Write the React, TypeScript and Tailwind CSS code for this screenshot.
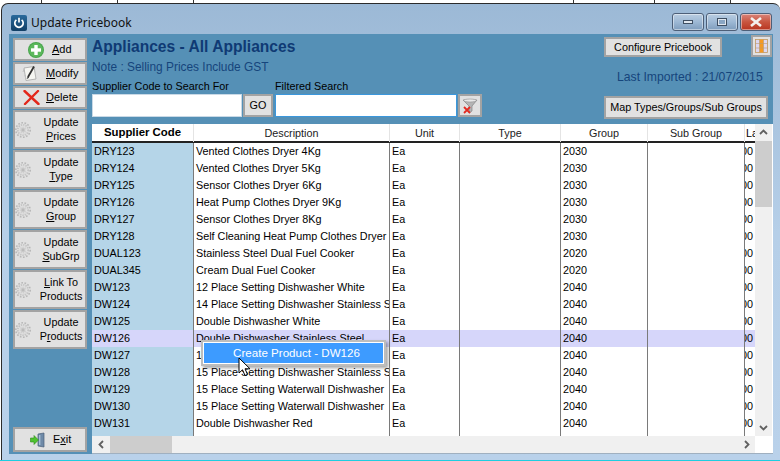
import React from "react";

type Row = [string, string, string];
const rows: Row[] = [
  ["DRY123", "Vented Clothes Dryer 4Kg", "2030"],
  ["DRY124", "Vented Clothes Dryer 5Kg", "2030"],
  ["DRY125", "Sensor Clothes Dryer 6Kg", "2030"],
  ["DRY126", "Heat Pump Clothes Dryer 9Kg", "2030"],
  ["DRY127", "Sensor Clothes Dryer 8Kg", "2030"],
  ["DRY128", "Self Cleaning Heat Pump Clothes Dryer 6Kg", "2030"],
  ["DUAL123", "Stainless Steel Dual Fuel Cooker", "2020"],
  ["DUAL345", "Cream Dual Fuel Cooker", "2020"],
  ["DW123", "12 Place Setting Dishwasher White", "2040"],
  ["DW124", "14 Place Setting Dishwasher Stainless Steel", "2040"],
  ["DW125", "Double Dishwasher White", "2040"],
  ["DW126", "Double Dishwasher Stainless Steel", "2040"],
  ["DW127", "15 Place Setting Dishwasher White", "2040"],
  ["DW128", "15 Place Setting Dishwasher Stainless Steel", "2040"],
  ["DW129", "15 Place Setting Waterwall Dishwasher", "2040"],
  ["DW130", "15 Place Setting Waterwall Dishwasher", "2040"],
  ["DW131", "Double Dishwasher Red", "2040"],
];

const btn = "border-2 border-[#a3a3a3] bg-[#e1e1e1] text-black";

function Gear() {
  return (
    <svg width="16" height="16" viewBox="0 0 16 16" className="shrink-0">
      <circle cx="8" cy="8" r="7.2" fill="none" stroke="#b8b8b8" strokeWidth="1.6" strokeDasharray="1.7 1.5" />
      <circle cx="8" cy="8" r="5.2" fill="none" stroke="#c4c4c4" strokeWidth="1.8" strokeDasharray="1.4 1" />
      <circle cx="8" cy="8" r="3.4" fill="#cecece" />
      <circle cx="8" cy="8" r="3" fill="none" stroke="#f0f0f0" strokeWidth="0.8" strokeDasharray="1 1.2" />
      <circle cx="8" cy="8" r="1.4" fill="#bbbbbb" />
    </svg>
  );
}

function TwoLine({ a, b }: { a: React.ReactNode; b: React.ReactNode }) {
  return (
    <div className={`${btn} h-[39px] flex items-center shrink-0`}>
      <Gear />
      <div className="flex-1 ml-[6px] text-center text-[10.8px] leading-[14px] pb-[2px] whitespace-nowrap">
        <div>{a}</div>
        <div>{b}</div>
      </div>
    </div>
  );
}

function U({ children }: { children: React.ReactNode }) {
  return <span className="underline">{children}</span>;
}

function Sidebar() {
  return (
    <div className="w-[74px] shrink-0 flex flex-col gap-[1px] h-[414px]">
      <div className={`${btn} h-[23px] flex items-center pl-[13px] gap-[8px] shrink-0 text-[11px]`}>
        <svg width="16" height="16" viewBox="0 0 16 16">
          <circle cx="8" cy="8" r="8" fill="#47a54b" />
          <circle cx="8" cy="8" r="7" fill="#5cb85c" />
          <rect x="3" y="6.3" width="10" height="3.4" fill="#fff" />
          <rect x="6.3" y="3" width="3.4" height="10" fill="#fff" />
        </svg>
        <span><U>A</U>dd</span>
      </div>
      <div className={`${btn} h-[23px] flex items-center pl-[7px] gap-[8px] shrink-0 text-[11px]`}>
        <svg width="16" height="17" viewBox="0 0 16 17">
          <path d="M2 3 L12 1.5 L14 14 L4 15.5 Z" fill="#f6f6f2" stroke="#a5a5a5" strokeWidth="0.8" />
          <path d="M2 4 L1 7 M3 10 L4 14" stroke="#c0c0c0" strokeWidth="1" />
          <path d="M12 1.5 L6 12" stroke="#333" strokeWidth="1.8" />
          <path d="M6 11.5 L5.2 13.6 L7 12.4" fill="#333" stroke="#333" strokeWidth="0.5" />
        </svg>
        <span><U>M</U>odify</span>
      </div>
      <div className={`${btn} h-[23px] flex items-center pl-[8px] gap-[6px] shrink-0 text-[11px]`}>
        <svg width="17" height="15" viewBox="0 0 17 15">
          <path d="M1.5 1 L15.5 14 M15 1 L2 14" stroke="#e3271b" strokeWidth="2.4" strokeLinecap="round" />
        </svg>
        <span><U>D</U>elete</span>
      </div>
      <TwoLine a="Update" b={<><U>P</U>rices</>} />
      <TwoLine a="Update" b={<><U>T</U>ype</>} />
      <TwoLine a="Update" b={<><U>G</U>roup</>} />
      <TwoLine a="Update" b={<><U>S</U>ubGrp</>} />
      <TwoLine a={<><U>L</U>ink To</>} b="Products" />
      <TwoLine a="Update" b={<>P<U>r</U>oducts</>} />
      <div className={`${btn} h-[25px] mt-auto flex items-center pl-[15px] gap-[7px] shrink-0 text-[11px]`}>
        <svg width="16" height="16" viewBox="0 0 16 16">
          <path d="M8 2 L14 1 V15 L8 14 Z" fill="#6f8aa8" stroke="#4b5f78" strokeWidth="0.7" />
          <rect x="9" y="3" width="1.4" height="10" fill="#a9bdd3" />
          <path d="M0.5 6 H4 V3.5 L8.5 8 L4 12.5 V10 H0.5 Z" fill="#4fc22f" stroke="#2e8c18" strokeWidth="0.6" />
        </svg>
        <span>E<U>x</U>it</span>
      </div>
    </div>
  );
}

function Header() {
  return (
    <div className="h-[90px] flex shrink-0">
      <div className="flex-1 flex flex-col">
        <div className="text-[15.6px] leading-[20px] font-bold text-[#0f3a74] h-[20px] mt-[3px]">Appliances - All Appliances</div>
        <div className="text-[11.9px] leading-[14px] text-[#15457c] mt-[3px]">Note : Selling Prices Include GST</div>
        <div className="flex mt-[5px] text-[10.8px] leading-[14px] text-black">
          <div className="w-[183px]">Supplier Code to Search For</div>
          <div>Filtered Search</div>
        </div>
        <div className="flex mt-[1px] h-[23px]">
          <div className="w-[150px] bg-white border border-[#c9d9e6]" />
          <div className={`${btn} w-[30px] ml-[1px] flex items-center justify-center text-[10.8px]`}>GO</div>
          <div className="w-[182px] ml-[2px] bg-white border border-[#3b97dc]" />
          <div className={`${btn} w-[24px] ml-[1px] flex items-center justify-center`}>
            <svg width="16" height="16" viewBox="0 0 16 16">
              <path d="M1 2 H15 L10 8 V13 L7 15 V8 Z" fill="#b5b5b5" stroke="#777" strokeWidth="0.6" />
              <ellipse cx="8" cy="2.5" rx="6.5" ry="1.5" fill="#e8e8e8" stroke="#888" strokeWidth="0.5" />
              <path d="M2 9 L8 15 M8 9 L2 15" stroke="#e32a20" strokeWidth="1.8" />
            </svg>
          </div>
        </div>
      </div>
      <div className="w-[169px] shrink-0 flex flex-col">
        <div className="flex items-start pt-[1px] h-[23px]">
          <div className={`${btn} w-[118px] h-[20px] mt-[2px] flex items-center justify-center text-[10.8px]`}>Configure Pricebook</div>
          <div className={`${btn} w-[21px] h-[22px] ml-[29px] flex items-center justify-center`}>
            <svg width="13" height="14" viewBox="0 0 13 14">
              <rect x="0.5" y="0.5" width="12" height="13" fill="#dcd8f2" stroke="#c09a60" strokeWidth="0.8" />
              <rect x="4.5" y="0.5" width="4" height="13" fill="#f59a23" />
              <path d="M0.5 4.5 H12.5 M0.5 9 H12.5 M4.5 0.5 V13.5 M8.5 0.5 V13.5" stroke="#b89a70" strokeWidth="0.6" />
            </svg>
          </div>
        </div>
        <div className="text-[12.2px] leading-[14px] text-[#15457c] mt-[13px] pl-[13px] whitespace-nowrap">Last Imported : 21/07/2015</div>
        <div className={`${btn} w-[164px] h-[23px] mt-[12px] flex items-center justify-center text-[10.8px] whitespace-nowrap`}>Map Types/Groups/Sub Groups</div>
      </div>
    </div>
  );
}

const cols = "grid-cols-[101px_196px_70px_101px_87px_97px_11px]";

function HeadCell({ children, bold }: { children: React.ReactNode; bold?: boolean }) {
  return (
    <div className={`h-[18px] flex items-center justify-center overflow-hidden whitespace-nowrap ${bold ? "font-bold text-black text-[11.4px]" : "border-l border-[#e4e4e4] text-[#222]"}`}>
      {children}
    </div>
  );
}

function Chevron({ d }: { d: string }) {
  return (
    <svg width="9" height="9" viewBox="0 0 9 9">
      <path d={d} fill="none" stroke="#606060" strokeWidth="1.8" />
    </svg>
  );
}

function Table() {
  return (
    <div className="h-[330px] bg-white flex flex-col text-[10.8px] border-b border-[#a0b0c0] shrink-0 font-['Liberation_Sans',sans-serif]">
      <div className="flex flex-1 min-h-0">
        <div className="w-[663px] flex flex-col">
          <div className={`grid ${cols} border-b-2 border-[#222] h-[19px] shrink-0`}>
            <HeadCell bold>Supplier Code</HeadCell>
            <HeadCell>Description</HeadCell>
            <HeadCell>Unit</HeadCell>
            <HeadCell>Type</HeadCell>
            <HeadCell>Group</HeadCell>
            <HeadCell>Sub Group</HeadCell>
            <div className="overflow-hidden border-l border-[#e4e4e4] pl-[1px] leading-[18px]">La</div>
          </div>
          <div className={`grid ${cols} flex-1 relative`}>
            <div className="bg-[#b5d5e8]">
              {rows.map((r, i) => (
                <div key={r[0]} className={`h-[17px] leading-[17px] pl-[2px] ${i === 11 ? "bg-[#d6d6fa]" : ""}`}>{r[0]}</div>
              ))}
            </div>
            <div className="border-l border-[#7a7a7a] overflow-hidden">
              {rows.map((r, i) => (
                <div key={r[0]} className={`h-[17px] leading-[17px] pl-[2px] overflow-hidden whitespace-nowrap ${i === 11 ? "bg-[#d6d6fa]" : ""}`}>{r[1]}</div>
              ))}
            </div>
            <div className="border-l border-[#7a7a7a]">
              {rows.map((r, i) => (
                <div key={r[0]} className={`h-[17px] leading-[17px] pl-[2px] ${i === 11 ? "bg-[#d6d6fa]" : ""}`}>Ea</div>
              ))}
            </div>
            <div className="border-l border-[#7a7a7a]">
              {rows.map((r, i) => (
                <div key={r[0]} className={`h-[17px] ${i === 11 ? "bg-[#d6d6fa]" : ""}`} />
              ))}
            </div>
            <div className="border-l border-[#7a7a7a]">
              {rows.map((r, i) => (
                <div key={r[0]} className={`h-[17px] leading-[17px] pl-[2px] ${i === 11 ? "bg-[#d6d6fa]" : ""}`}>{r[2]}</div>
              ))}
            </div>
            <div className="border-l border-[#7a7a7a]">
              {rows.map((r, i) => (
                <div key={r[0]} className={`h-[17px] ${i === 11 ? "bg-[#d6d6fa]" : ""}`} />
              ))}
            </div>
            <div className="border-l border-[#7a7a7a] overflow-hidden">
              {rows.map((r, i) => (
                <div key={r[0]} className={`h-[17px] leading-[17px] flex justify-end pr-[2px] ${i === 11 ? "bg-[#d6d6fa]" : ""}`}>
                  <span className="shrink-0">100</span>
                </div>
              ))}
            </div>
            <div className="absolute left-[109px] top-[197px] w-[185px] h-[26px] bg-white border-2 border-[#bdbdbd] shadow-[2px_2px_3px_rgba(0,0,0,0.35)] p-[1px]">
              <div className="h-full bg-[#3d9bff] text-white text-[11.6px] leading-[20px] text-center pl-[6px] font-['Liberation_Sans',sans-serif]">Create Product - DW126</div>
            </div>
            <svg width="14" height="20" viewBox="0 0 14 20" className="absolute left-[146px] top-[214px]">
              <path d="M1 1 V16 L4.5 12.8 L7 18.5 L9.5 17.4 L7 11.8 H12 Z" fill="#fff" stroke="#000" strokeWidth="1" strokeLinejoin="round" />
            </svg>
          </div>
          <div className="h-[17px] bg-[#f0f0f0] flex items-center shrink-0">
            <div className="w-[18px] flex justify-center shrink-0"><Chevron d="M6 1 L2.5 4.5 L6 8" /></div>
            <div className="w-[62px] h-[17px] bg-[#cdcdcd]" />
            <div className="flex-1" />
            <div className="w-[18px] flex justify-center shrink-0"><Chevron d="M3 1 L6.5 4.5 L3 8" /></div>
          </div>
        </div>
        <div className="w-[17px] flex flex-col shrink-0">
          <div className="flex-1 flex flex-col bg-[#f0f0f0]">
            <div className="h-[17px] flex items-center justify-center shrink-0"><Chevron d="M1 6 L4.5 2.5 L8 6" /></div>
            <div className="h-[66px] bg-[#cdcdcd] shrink-0" />
            <div className="flex-1" />
            <div className="h-[17px] flex items-center justify-center shrink-0"><Chevron d="M1 3 L4.5 6.5 L8 3" /></div>
          </div>
          <div className="h-[17px] bg-white shrink-0" />
        </div>
      </div>
    </div>
  );
}

function WinBtn({ children, red }: { children: React.ReactNode; red?: boolean }) {
  return (
    <div className={`w-[32px] h-[18px] rounded-[3px] border border-[#4d5f78] flex items-center justify-center shadow-[inset_0_0_0_1px_rgba(255,255,255,0.45)] ${red ? "bg-gradient-to-b from-[#d9837a] via-[#c8553f] to-[#b8341f]" : "bg-gradient-to-b from-[#b9cde2] via-[#9db8d4] to-[#7f9dbd]"}`}>
      {children}
    </div>
  );
}

export default function App() {
  return (
    <div className="w-[780px] h-[461px] bg-white overflow-hidden flex flex-col font-['Liberation_Sans',sans-serif]">
      <div className="h-[3px] flex shrink-0">
        <div className="w-[42px] border-r border-[#333]" />
        <div className="w-[76px] border-r border-[#333]" />
        <div className="w-[76px] border-r border-[#333]" />
        <div className="w-[380px] border-r border-[#333]" />
        <div className="w-[81px] border-r border-[#333]" />
        <div className="w-[76px] border-r border-[#333]" />
      </div>
      <div className="ml-[1px] h-[457px] shrink-0 border-l border-t border-[#2b2b2b] rounded-t-[7px] bg-gradient-to-b from-[#9cb9d6] via-[#b6cfe8] to-[#b9d1ea] flex flex-col pl-[7px]">
        <div className="h-[30px] flex items-center shrink-0 pt-[8px]">
          <div className="w-[16px] h-[16px] ml-[2px] rounded-[2px] bg-gradient-to-b from-[#2a6a9c] to-[#123f66] flex items-center justify-center">
            <svg width="12" height="12" viewBox="0 0 12 12">
              <path d="M3.4 2.8 A4.2 4.2 0 1 0 8.6 2.8" fill="none" stroke="#fff" strokeWidth="1.7" />
              <path d="M6 0.8 V5.5" stroke="#fff" strokeWidth="1.7" />
            </svg>
          </div>
          <div className="ml-[4px] text-[12px] text-[#111] font-['Noto_Sans',sans-serif] leading-[16px]">Update Pricebook</div>
          <div className="ml-auto flex gap-[2px] mr-[8px] -mt-[3px]">
            <WinBtn><div className="w-[10px] h-[4px] bg-[#dfe6ee] border border-[#3e4e62]" /></WinBtn>
            <WinBtn><div className="w-[10px] h-[8px] bg-[#dfe6ee] border border-[#3e4e62] p-[1px]"><div className="w-full h-full bg-[#8aa6c4]" /></div></WinBtn>
            <WinBtn red>
              <svg width="14" height="10" viewBox="0 0 14 10">
                <path d="M2 1 L12 9 M12 1 L2 9" stroke="#f4f0ee" strokeWidth="2.6" />
              </svg>
            </WinBtn>
          </div>
        </div>
        <div className="w-[764px] h-[420px] bg-[#5590b6] flex pl-[4px] pt-[4px] gap-[5px] shrink-0">
          <Sidebar />
          <div className="flex-1 flex flex-col -mt-[4px]">
            <Header />
            <Table />
          </div>
        </div>
      </div>
      <div className="h-[1px] bg-[#1fcde0] shrink-0" />
    </div>
  );
}
